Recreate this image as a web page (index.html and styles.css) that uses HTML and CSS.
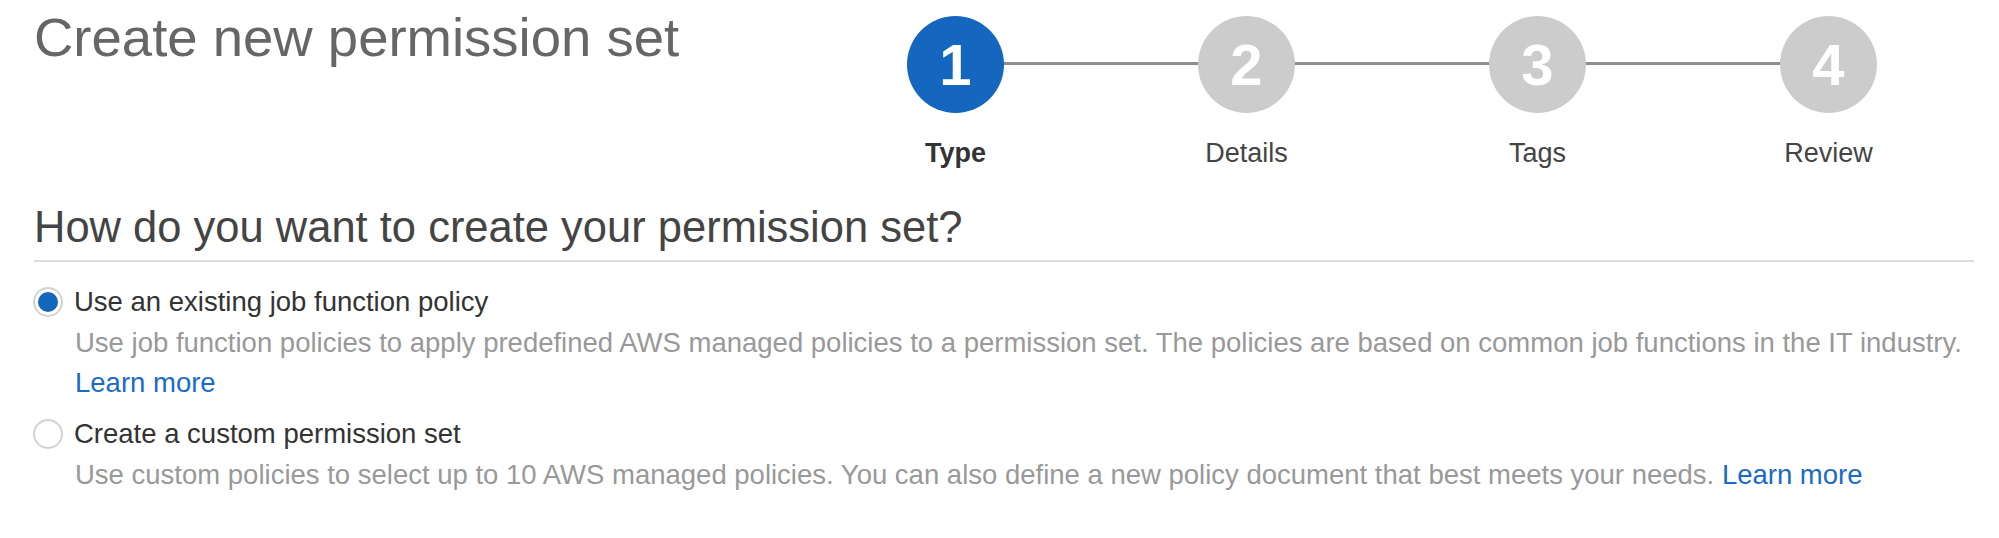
FILE: index.html
```html
<!DOCTYPE html>
<html lang="en">
<head>
<meta charset="utf-8">
<title>Create new permission set</title>
<link rel="stylesheet" href="styles.css">
</head>
<body>
<div class="page">
  <header class="header">
    <h1 class="title">Create new permission set</h1>
    <ol class="stepper">
      <li class="step active"><span class="circle">1</span><span class="step-label">Type</span></li>
      <li class="step"><span class="circle">2</span><span class="step-label">Details</span></li>
      <li class="step"><span class="circle">3</span><span class="step-label">Tags</span></li>
      <li class="step"><span class="circle">4</span><span class="step-label">Review</span></li>
    </ol>
  </header>

  <h2 class="section-title">How do you want to create your permission set?</h2>

  <div class="options">
    <label class="option">
      <span class="option-row">
        <span class="radio checked"></span>
        <span class="option-label">Use an existing job function policy</span>
      </span>
      <span class="option-desc">Use job function policies to apply predefined AWS managed policies to a permission set. The policies are based on common job functions in the IT industry. <a class="link" href="#">Learn more</a></span>
    </label>
    <label class="option">
      <span class="option-row">
        <span class="radio"></span>
        <span class="option-label">Create a custom permission set</span>
      </span>
      <span class="option-desc">Use custom policies to select up to 10 AWS managed policies. You can also define a new policy document that best meets your needs. <a class="link" href="#">Learn more</a></span>
    </label>
  </div>
</div>
</body>
</html>
```

FILE: styles.css
```css
* { box-sizing: border-box; }

html, body {
  margin: 0;
  padding: 0;
  background: #ffffff;
}

body {
  font-family: "Liberation Sans", Arial, Helvetica, sans-serif;
  color: #444;
}

.page {
  padding: 0 25px 0 34px;
  width: 1999px;
}

.header {
  display: flex;
  justify-content: space-between;
  align-items: flex-start;
}

.title {
  margin: 11px 0 0 0;
  font-size: 54.5px;
  line-height: 54px;
  font-weight: normal;
  color: #666;
}

.stepper {
  list-style: none;
  margin: 0;
  padding: 0;
  display: grid;
  grid-template-columns: repeat(4, 291px);
}

.step {
  position: relative;
  display: flex;
  flex-direction: column;
  align-items: center;
  padding-top: 16px;
}

.step:not(:last-child)::after {
  content: "";
  position: absolute;
  left: 50%;
  width: 100%;
  top: 62px;
  height: 3px;
  background: #8e8e8e;
  z-index: 0;
}

.circle {
  position: relative;
  z-index: 1;
  width: 97px;
  height: 97px;
  border-radius: 50%;
  background: #cccccc;
  color: #ffffff;
  font-weight: bold;
  font-size: 58px;
  line-height: 97px;
  text-align: center;
}

.step.active .circle {
  background: #1466bf;
}

.step-label {
  margin-top: 24px;
  font-size: 27px;
  line-height: 32px;
  color: #444;
}

.step.active .step-label {
  font-weight: bold;
  color: #333;
}

.section-title {
  margin: 32px 0 0 0;
  padding-bottom: 7px;
  font-size: 43.5px;
  line-height: 52px;
  font-weight: normal;
  color: #444;
  border-bottom: 2px solid #dddddd;
}

.options {
  display: flex;
  flex-direction: column;
  gap: 11px;
  margin-top: 20px;
}

.option {
  display: flex;
  flex-direction: column;
  font-size: 27.5px;
  line-height: 40px;
}

.option-row {
  display: flex;
  align-items: center;
  gap: 11px;
}

.radio {
  width: 30px;
  height: 30px;
  border-radius: 50%;
  border: 2px solid #d2d2d2;
  background: #ffffff;
  display: flex;
  align-items: center;
  justify-content: center;
  flex: none;
  margin-left: -1px;
}

.radio.checked::before {
  content: "";
  width: 20px;
  height: 20px;
  border-radius: 50%;
  background: #1466bf;
}

.option-label {
  color: #333;
}

.option-desc {
  padding-left: 41px;
  margin-top: 1px;
  color: #999999;
}

.link {
  color: #1a6bc6;
  text-decoration: none;
}
```
